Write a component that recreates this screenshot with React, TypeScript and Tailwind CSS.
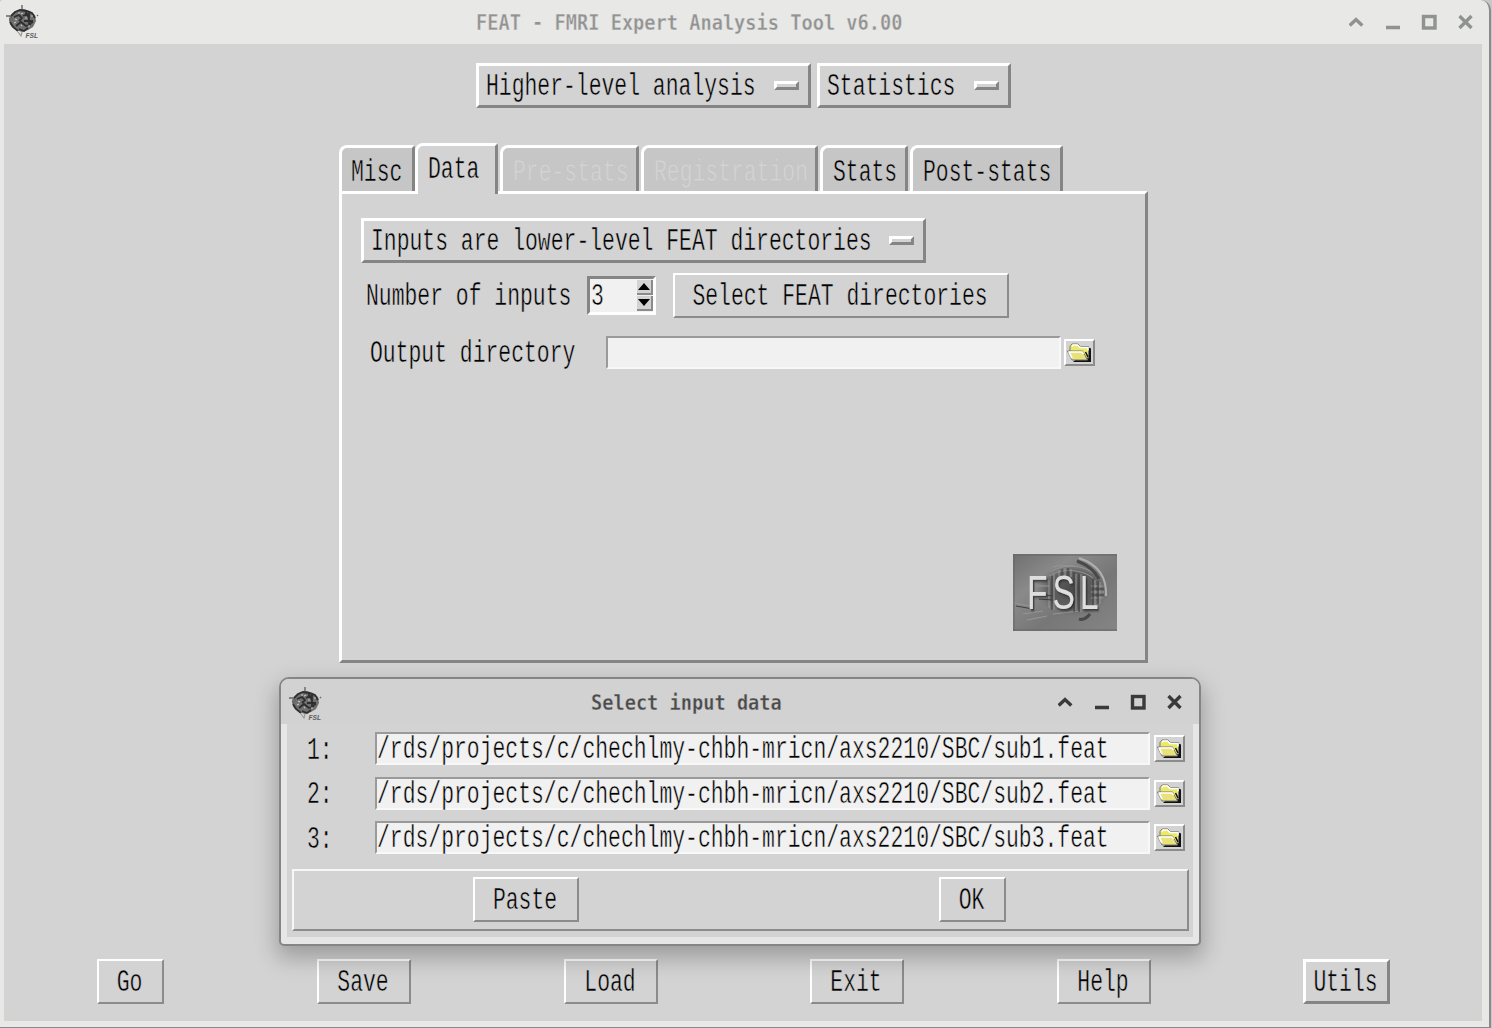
import type { ReactNode } from "react";

const BTN = "flex items-center justify-center border-2 border-t-white border-l-white border-r-[#8b8b8b] border-b-[#8b8b8b] bg-[#d3d3d3] pr-[2px]";
const ENTRY = "flex items-center border-2 border-t-[#9a9a9a] border-l-[#9a9a9a] border-r-[#f8f8f8] border-b-[#f8f8f8] bg-[#f1f1f1]";
const MENU = "flex items-center justify-between border-[3px] border-t-white border-l-white border-r-[#858585] border-b-[#858585] bg-[#d3d3d3] pl-[7px] pr-[9px]";

function T({ children, className = "text-black [-webkit-text-stroke:0.35px_#d3d3d3]" }: { children: ReactNode; className?: string }) {
  return (
    <span className={`inline-block h-[21px] shrink-0 translate-y-[1.5px] scale-y-[1.45] whitespace-pre font-['Liberation_Mono',monospace] text-[21.4px] leading-[21px] ${className}`}>
      {children}
    </span>
  );
}

function Dash() {
  return <span className="h-[9px] w-[25px] shrink-0 border-[3px] border-t-white border-l-white border-r-[#858585] border-b-[#858585] bg-[#d3d3d3]" />;
}

function Brain() {
  return (
    <svg width="36" height="36" viewBox="0 0 36 36" className="shrink-0" fill="none">
      <path d="M3 14 7 10l5-4 6-1 6 2 5 4 1 6-3 6-5 3-6 2-6-2-5-4-2-6z" fill="#707070" />
      <path d="M0 12h4l3 4M16 1v9M31 12l1-1M4 15l1 6" stroke="#666" strokeWidth="1.4" />
      <path d="m5 12 4-4 5-2 6 1 6 2 3 5M8 13l5-2 3 3-3 3M4 18l3 5 5 4M17 12l4-2 2 4M23 8v12l4-2M18 17h9M10 22l5-4 5 4 5-2M13 25l5 2 4-3M20 6v6" stroke="#2e2e2e" strokeWidth="1.800" />
      <path d="m9 15 2 1M15 10l2-1M19 14h2M15 21l1 1M8 19l2-1M25 12h2M22 22h2M12 9h2" stroke="#c4c4c4" strokeWidth="1.2" />
      <path d="m12 28 3 4 1-4" stroke="#999" strokeWidth="1.2" />
      <text x="19.500" y="34" fontSize="8" fontWeight="bold" fontStyle="italic" fontFamily="Liberation Sans, sans-serif" fill="#5c5c5c" textLength="12.500" lengthAdjust="spacingAndGlyphs">FSL</text>
    </svg>
  );
}

function Controls({ color }: { color: string }) {
  return (
    <svg width="130" height="20" viewBox="0 0 130 20" fill="none" stroke={color} strokeWidth="3.400" className="shrink-0">
      <path d="m.700 13.500 6.300-6 6.300 6M37 15.500h14M110.500 4l12 12M122.500 4l-12 12" />
      <rect x="74.500" y="4.500" width="11.500" height="11.500" />
    </svg>
  );
}

function Folder() {
  return (
    <span className="flex h-[27px] w-[31px] shrink-0 items-center justify-center border-2 border-t-white border-l-white border-r-[#8b8b8b] border-b-[#8b8b8b] bg-[#d3d3d3]">
      <svg width="27" height="23" viewBox="0 0 27 23" className="shrink-0">
        <path d="M7 21h18V7.500l-2.500-1z" fill="#111" />
        <path d="M4 10V5.500L6 3h6l2.500 2.500h8V17H6z" fill="#ece967" stroke="#777" />
        <path d="M6 5.500 7 4h4.500L14 6.500h8v3" stroke="#fff" strokeWidth="1.500" fill="none" />
        <path d="M1.500 10h15l5 9H6z" fill="#e9e27a" stroke="#777" />
        <path d="M2.500 11h13.500l1.500 2M3 11l3 6" stroke="#fff" strokeWidth="1.700" fill="none" />
        <path d="m19.500 11 2.500 5" stroke="#111" strokeWidth="1.500" />
      </svg>
    </span>
  );
}

function Tab({ label, w, active, disabled, pad = "pl-[10px]" }: { label: string; w: string; active?: boolean; disabled?: boolean; pad?: string }) {
  return (
    <div className={`relative flex shrink-0 ${pad} ${w} ${active ? "z-10 h-[51px] bg-[#d3d3d3] pt-[12px]" : "h-[46px] bg-[#c6c6c6] pt-[13px]"} rounded-tl-[8px] rounded-tr-[3px] border-[3px] border-b-0 border-t-white border-l-white border-r-[#858585]`}>
      <T className={disabled ? "text-[#d3d3d3] [-webkit-text-stroke:0.2px_#c0c0c0]" : "text-black [-webkit-text-stroke:0.35px_#cccccc]"}>{label}</T>
    </div>
  );
}

function FslPicture() {
  return (
    <svg width="104" height="77" viewBox="0 0 104 77" fill="none">
      <defs>
        <linearGradient id="slate" x1="0" y1="0" x2="1" y2="1">
          <stop offset="0" stopColor="#707070" />
          <stop offset=".3" stopColor="#8a8a8a" />
          <stop offset=".6" stopColor="#777777" />
          <stop offset="1" stopColor="#858585" />
        </linearGradient>
        <radialGradient id="core">
          <stop offset="0" stopColor="#4a4a4a" />
          <stop offset=".7" stopColor="#626262" />
          <stop offset="1" stopColor="#757575" stopOpacity="0" />
        </radialGradient>
        <filter id="soft"><feGaussianBlur stdDeviation=".6" /></filter>
        <filter id="relief" x="-10%" y="-50%" width="120%" height="200%"><feGaussianBlur stdDeviation=".4" /><feDropShadow dx="2" dy="2" stdDeviation=".9" floodColor="#2c2c2c" floodOpacity=".8" /></filter>
      </defs>
      <rect width="104" height="77" fill="url(#slate)" />
      <ellipse cx="60" cy="36" rx="37" ry="27" fill="url(#core)" />
      <g filter="url(#soft)">
        <path d="M38 18c10-7 28-9 42 1M36 22c14-9 34-6 44 2M40 13c9-2 15-2 22-1M0 49l18 3M10 60l20-3M14 66l20-4M40 60l26-3" stroke="#959595" />
        <path d="M36 26v28M41 20v36M46 16v8M52 14v8M58 15v8M63 20v36M68 20v38M82 26v26M87 28v22M78 32h12M78 38h13M78 44h12M24 32h12M22 44h12" stroke="#989898" />
        <path d="M39 22v34M49 15v8M55 14v8M61 18v40M66 20v38M80 25v27M85 27v23M3 52l17 3M26 40l14 2M26 45l14 1M80 35h11M80 41h11" stroke="#3f3f3f" />
        <path d="M64 7c11 4 18 10 22 18M77 60c-4 5-8 6-11 5" stroke="#484848" strokeWidth="3" />
        <path d="M66 4c18 6 28 18 27 38" stroke="#b0b0b0" strokeWidth="2" />
        <path d="M0 1h104M1 0v77M0 76h104" stroke="#666" />
      </g>
      <text transform="translate(14 55) scale(.7 1)" fontFamily="Liberation Sans, sans-serif" fontSize="48" letterSpacing="7" fill="#dedede" filter="url(#relief)">FSL</text>
    </svg>
  );
}

function InputRow({ n }: { n: number }) {
  return (
    <div className="flex h-[33px] items-center">
      <div className="w-[88px] pl-[20px]"><T>{`${n}:`}</T></div>
      <div className={`${ENTRY} h-[33px] w-[775px] shrink-0`}>
        <T className="text-black [-webkit-text-stroke:0.35px_#f1f1f1]">{`/rds/projects/c/chechlmy-chbh-mricn/axs2210/SBC/sub${n}.feat`}</T>
      </div>
      <div className="ml-[4px] flex"><Folder /></div>
    </div>
  );
}

function Dialog() {
  return (
    <div className="absolute top-[677px] left-[279px] flex h-[269px] w-[922px] flex-col rounded-t-[10px] rounded-b-[5px] border-2 border-[#858585] bg-[#e6e6e6] shadow-[0_10px_22px_2px_rgba(0,0,0,0.26)]">
      <div className="flex h-[45px] shrink-0 items-center rounded-t-[8px] bg-[#d2d2d2] pr-[10px] pl-[8px]">
        <div className="flex pt-[4px]"><Brain /></div>
        <span className="ml-[266px] translate-y-[1px] scale-y-[1.12] font-['DejaVu_Sans_Mono',monospace] text-[18.650px] font-bold whitespace-pre text-[#4b4b4b] [-webkit-text-stroke:0.3px_#d2d2d2]">Select input data</span>
        <div className="mr-px ml-auto flex"><Controls color="#3a3a3a" /></div>
      </div>
      <div className="mx-[6px] flex h-[213px] flex-col bg-[#d3d3d3] pt-[8px] pr-[5px]">
        <div className="flex h-[122px] shrink-0 flex-col justify-between">
          <InputRow n={1} />
          <InputRow n={2} />
          <InputRow n={3} />
        </div>
        <div className="mt-[15px] ml-[5px] flex h-[62px] w-[897px] shrink-0 items-start border-2 border-t-[#f7f7f7] border-l-[#f7f7f7] border-r-[#8b8b8b] border-b-[#8b8b8b] pt-[6px] pl-[179px]">
          <div className={`${BTN} h-[45px] w-[106px]`}><T>Paste</T></div>
          <div className={`${BTN} ml-[360px] h-[45px] w-[67px]`}><T>OK</T></div>
        </div>
      </div>
    </div>
  );
}

export default function App() {
  return (
    <div className="h-[1028px] w-[1492px] overflow-hidden bg-[#c8c8c8]">
      <div className="relative flex h-[1028px] w-[1491px] flex-col rounded-tl-[3px] rounded-tr-[10px] border-r-2 border-b border-[#8a8a8a] bg-[#e8e8e6]">
        <div className="flex h-[44px] shrink-0 items-center pl-[6px]">
          <Brain />
          <span className="ml-[434px] translate-y-[1px] scale-y-[1.12] font-['DejaVu_Sans_Mono',monospace] text-[18.650px] font-bold whitespace-pre text-[#929292] [-webkit-text-stroke:0.3px_#e8e8e6]">FEAT - FMRI Expert Analysis Tool v6.00</span>
          <div className="mr-[10px] ml-auto flex"><Controls color="#909292" /></div>
        </div>
        <div className="ml-[4px] flex h-[977px] w-[1478px] shrink-0 flex-col bg-[#d3d3d3]">
          <div className="flex h-[99px] gap-[6px] pt-[19px] pl-[472px]">
            <div className={`${MENU} h-[45px] w-[335px]`}><T>Higher-level analysis</T><Dash /></div>
            <div className={`${MENU} h-[45px] w-[194px]`}><T>Statistics</T><Dash /></div>
          </div>
          <div className="ml-[335px] flex h-[48px] shrink-0 items-end">
            <Tab label="Misc" w="w-[76px]" pad="pl-[9px]" />
            <div className="-mb-[3px] flex"><Tab label="Data" w="w-[83px]" active /></div>
            <div className="ml-[2px] flex gap-[2px]">
              <Tab label="Pre-stats" w="w-[139px]" disabled />
              <Tab label="Registration" w="w-[177px]" disabled />
              <Tab label="Stats" w="w-[88px]" />
              <Tab label="Post-stats" w="w-[153px]" />
            </div>
          </div>
          <div className="ml-[335px] flex h-[472px] w-[809px] shrink-0 flex-col border-[3px] border-t-white border-l-white border-r-[#858585] border-b-[#858585] pt-[24px] pl-[19px]">
            <div className={`${MENU} h-[45px] w-[565px] shrink-0`}><T>Inputs are lower-level FEAT directories</T><Dash /></div>
            <div className="mt-[10px] flex h-[44px] shrink-0 items-center pl-[5px]">
              <div className="w-[221px]"><T>Number of inputs</T></div>
              <div className="flex h-[39px] w-[69px] items-center justify-between border-[3px] border-t-[#858585] border-l-[#858585] border-r-white border-b-white bg-[#f1f1f1] pl-[1px]">
                <T className="text-black [-webkit-text-stroke:0.35px_#f1f1f1]">3</T>
                <div className="flex flex-col gap-px">
                  <span className="flex h-[15px] w-[16px] items-center justify-center border-r-2 border-b-2 border-[#8b8b8b] bg-[#d3d3d3]"><svg width="12" height="7"><path d="M6 0 12 7H0z" fill="#000" /></svg></span>
                  <span className="flex h-[15px] w-[16px] items-center justify-center border-r-2 border-b-2 border-[#8b8b8b] bg-[#d3d3d3]"><svg width="12" height="7"><path d="M6 7 12 0H0z" fill="#000" /></svg></span>
                </div>
              </div>
              <div className={`${BTN} ml-[17px] h-[45px] w-[336px]`}><T>Select FEAT directories</T></div>
            </div>
            <div className="mt-[18px] flex h-[34px] shrink-0 items-center pl-[9px]">
              <div className="w-[236px]"><T>Output directory</T></div>
              <div className={`${ENTRY} h-[33px] w-[455px]`} />
              <div className="ml-[3px] flex"><Folder /></div>
            </div>
            <div className="mt-[185px] ml-[652px] flex"><FslPicture /></div>
          </div>
          <div className="mt-[296px] flex h-[45px] shrink-0 pl-[93px]">
            <div className={`${BTN} w-[67px]`}><T>Go</T></div>
            <div className={`${BTN} ml-[153px] w-[94px]`}><T>Save</T></div>
            <div className={`${BTN} ml-[153px] w-[94px]`}><T>Load</T></div>
            <div className={`${BTN} ml-[152px] w-[94px]`}><T>Exit</T></div>
            <div className={`${BTN} ml-[153px] w-[94px]`}><T>Help</T></div>
            <div className="ml-[152px] flex w-[87px] items-center justify-center border-[3px] border-t-white border-l-white border-r-[#858585] border-b-[#858585] pr-[2px]"><T>Utils</T></div>
          </div>
        </div>
        <Dialog />
      </div>
    </div>
  );
}
